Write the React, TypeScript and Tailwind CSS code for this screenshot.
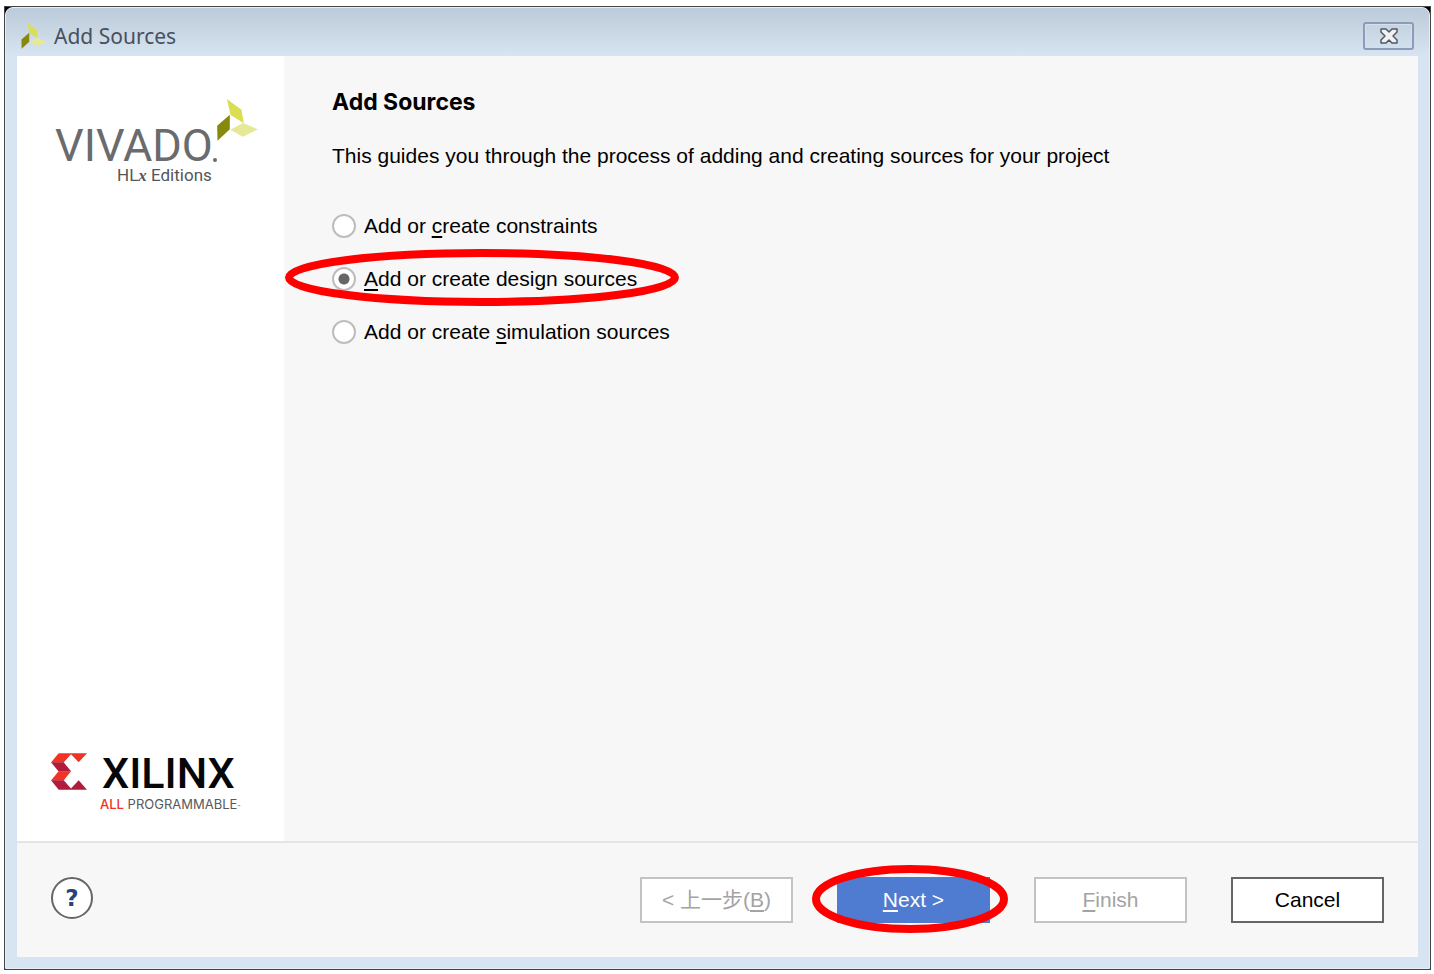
import React from "react";

type SourceKind = "constraints" | "design" | "simulation";

const OPTIONS: { id: SourceKind; before: string; key: string; after: string }[] = [
  { id: "constraints", before: "Add or ", key: "c", after: "reate constraints" },
  { id: "design", before: "", key: "A", after: "dd or create design sources" },
  { id: "simulation", before: "Add or create ", key: "s", after: "imulation sources" },
];

// Three-leaf Vivado mark
function LeafMark(props: React.SVGProps<SVGSVGElement>) {
  return (
    <svg viewBox="0 0 122 126" aria-hidden="true" {...props}>
      <path d="M29 0 L73 32 L80 73 L40 48 Z" fill="#d9de52" />
      <path d="M0 80 L38 47 L38 91 L1 125 Z" fill="#86890b" />
      <path d="M39 92 L78 72 L122 91 L77 113 Z" fill="#e5e898" />
    </svg>
  );
}

function VivadoLogo() {
  return (
    <svg width="210" height="90" viewBox="0 0 210 90" role="img" aria-label="Vivado HLx Editions">
      <text x="6" y="65" fontSize="45" fill="#6a6b6d" fontFamily="Roboto, sans-serif">
        VIVADO
      </text>
      <circle cx="166" cy="64" r="2" fill="#6a6b6d" />
      <text x="68" y="85" fontSize="17" fill="#555557" fontFamily="Roboto, sans-serif">
        HL
        <tspan fontFamily="'Liberation Serif', serif" fontStyle="italic" fontWeight="bold">x</tspan>
        {" Editions"}
      </text>
      <LeafMark x="168" y="3" width="41" height="42" />
    </svg>
  );
}

function XilinxLogo() {
  return (
    <svg width="200" height="64" viewBox="0 0 200 64" className="overflow-visible" role="img" aria-label="Xilinx All Programmable">
      <svg x="2" y="4" width="36" height="37" viewBox="0 0 108 110">
        <path d="M23 0 H108 L83 27 L60 3 L38 28 H0 Z" fill="#ef3324" />
        <path d="M0 27 H38 L60 54 L60 55 H23 Z" fill="#b01c3c" />
        <path d="M23 54 H60 L38 82 H0 Z" fill="#ef3324" />
        <path d="M0 81 H38 L60 106 L83 81 L108 110 H23 Z" fill="#b01c3c" />
      </svg>
      <text x="53" y="39" fontSize="43" fontWeight="500" fill="#050708" fontFamily="Roboto, sans-serif">
        XILINX
      </text>
      <text x="51" y="60" fontSize="13" fill="#58595b" fontFamily="Inter, sans-serif">
        <tspan fill="#ef3324" fontWeight="500">ALL</tspan> PROGRAMMABLE
        <tspan fontSize="5">™</tspan>
      </text>
    </svg>
  );
}

// Red pen ring drawn over whatever it is placed in
function Ring({ className }: { className: string }) {
  return (
    <svg className={`absolute pointer-events-none overflow-visible ${className}`} aria-hidden="true">
      <ellipse cx="50%" cy="50%" rx="50%" ry="50%" fill="none" stroke="#fe0000" strokeWidth="8" />
    </svg>
  );
}

export default function App() {
  const [kind, setKind] = React.useState<SourceKind>("design");
  const button = "h-[46px] w-[153px] border-2 bg-white";

  return (
    <div className="min-h-screen flex bg-white pt-1.5 pl-1 pr-[3px] pb-1 font-['Liberation_Sans','Noto_Sans_CJK_SC',sans-serif] text-[21px] text-black">
      <div className="flex-1 flex bg-black border border-[#444]">
        <div className="flex-1 flex flex-col rounded-t-lg border border-[#e6eff8] bg-[#d7e4f2] bg-[linear-gradient(#bccbd9,#d7e4f2_48px)] bg-no-repeat px-[11px] pb-[11px]">
          {/* Title bar */}
          <header className="h-12 flex items-center justify-between pt-2 px-1">
            <div className="flex items-center gap-[7px] font-['Noto_Sans',sans-serif] text-[#47505c]">
              <LeafMark className="w-[26px] h-[26px]" />
              <span className="leading-7">Add Sources</span>
            </div>
            <button
              aria-label="Close"
              className="flex items-center justify-center w-[51px] h-7 rounded-[3px] border-2 border-[#8c9bb9] shadow-[inset_0_0_0_1px_#d5e0ec]"
            >
              <svg width="20" height="16" viewBox="0 0 20 16" aria-hidden="true">
                <path d="M2 1 H7 L10 4 L13 1 H18 V4 L14 8 L18 12 V15 H13 L10 12 L7 15 H2 V12 L6 8 L2 4 Z" fill="#f1f1f1" stroke="#515766" strokeWidth="1.5" strokeLinejoin="round" />
              </svg>
            </button>
          </header>

          <div className="flex-1 flex flex-col bg-[#f7f7f7]">
            <div className="flex-1 flex">
              <aside className="w-[267px] flex flex-col justify-between bg-white pt-10 pb-7 pl-8">
                <VivadoLogo />
                <XilinxLogo />
              </aside>

              <main className="flex-1 px-12 pt-8">
                <h1 className="font-['Inter',sans-serif] font-bold text-[23px] leading-7">Add Sources</h1>
                <p className="mt-[26px] leading-7">
                  This guides you through the process of adding and creating sources for your project
                </p>
                <div role="radiogroup" aria-label="Source type" className="mt-11 flex flex-col items-start gap-[29px]">
                  {OPTIONS.map((o) => (
                    <label key={o.id} className="relative flex items-center gap-2 h-6">
                      <input
                        type="radio"
                        name="source"
                        checked={kind === o.id}
                        onChange={() => setKind(o.id)}
                        className="appearance-none w-6 h-6 rounded-full border-2 border-[#bdbdbd] bg-white checked:bg-[radial-gradient(circle,#666_5px,#fff_6px)]"
                      />
                      <span>
                        {o.before}
                        <span className="underline underline-offset-3 decoration-2">{o.key}</span>
                        {o.after}
                      </span>
                      {o.id === "design" && <Ring className="-left-[43px] -top-[14px] w-[386px] h-[49px]" />}
                    </label>
                  ))}
                </div>
              </main>
            </div>

            {/* Wizard buttons */}
            <footer className="flex items-start justify-between border-t-2 border-[#e5e5e5] px-[34px] py-[34px]">
              <button
                aria-label="Help"
                className="w-[42px] h-[42px] rounded-full border-2 border-[#666] bg-white font-['DejaVu_Sans',sans-serif] font-bold text-[23px] text-[#27427f]"
              >
                ?
              </button>
              <div className="flex gap-11">
                <button disabled className={`${button} border-[#c3c3c3] text-[#a3a3a3]`}>
                  &lt; 上一步(<span className="underline underline-offset-3 decoration-2">B</span>)
                </button>
                <div className="relative">
                  <button className="h-[46px] w-[153px] bg-[#4f7bd0] text-white">
                    <span className="underline underline-offset-3 decoration-2">N</span>ext &gt;
                  </button>
                  <Ring className="-left-[21px] -top-2 w-[188px] h-[60px]" />
                </div>
                <button disabled className={`${button} border-[#c3c3c3] text-[#a3a3a3]`}>
                  <span className="underline underline-offset-3 decoration-2">F</span>inish
                </button>
                <button className={`${button} border-[#666]`}>Cancel</button>
              </div>
            </footer>
          </div>
        </div>
      </div>
    </div>
  );
}
